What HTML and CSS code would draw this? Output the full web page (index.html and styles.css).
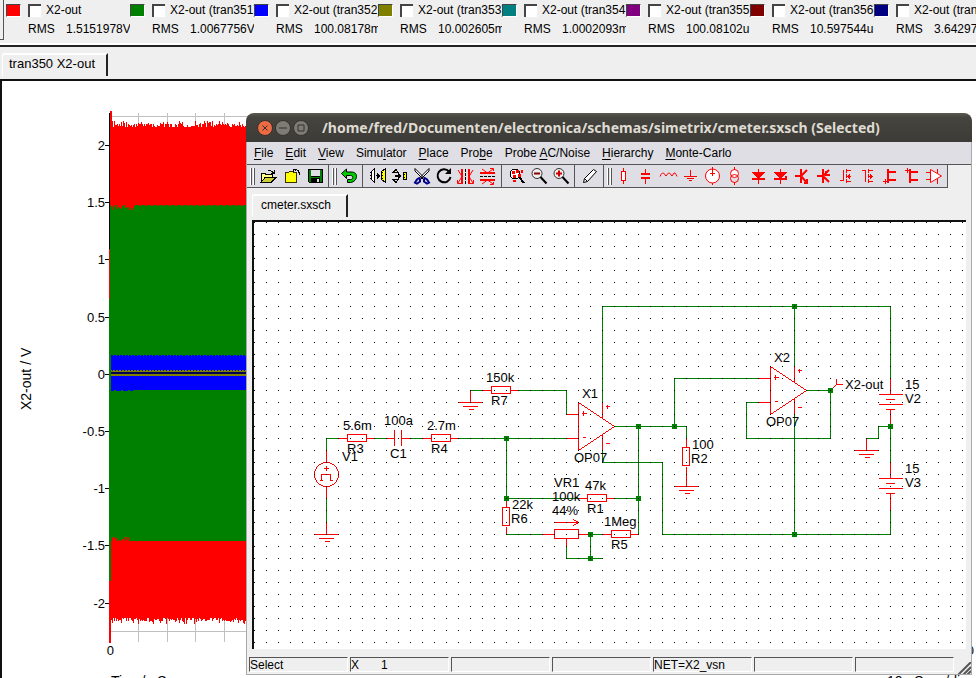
FILE: index.html
```html
<!DOCTYPE html>
<html lang="en">
<head>
  <meta charset="UTF-8">
  <title>SIMetrix</title>
  <link rel="stylesheet" href="styles.css">
</head>
<body>

  <!-- Graph viewer -->
  <div class="legend">
    <div class="legend-grip"></div>
    <div class="curve">
      <span class="swatch red"></span><input type="checkbox" id="c1"><label for="c1">X2-out</label>
      <span class="rms">RMS</span><span class="value">1.5151978V</span>
    </div>
    <div class="curve">
      <span class="swatch green"></span><input type="checkbox" id="c2"><label for="c2">X2-out (tran351)</label>
      <span class="rms">RMS</span><span class="value">1.0067756V</span>
    </div>
    <div class="curve">
      <span class="swatch blue"></span><input type="checkbox" id="c3"><label for="c3">X2-out (tran352)</label>
      <span class="rms">RMS</span><span class="value">100.08178m</span>
    </div>
    <div class="curve">
      <span class="swatch olive"></span><input type="checkbox" id="c4"><label for="c4">X2-out (tran353)</label>
      <span class="rms">RMS</span><span class="value">10.002605m</span>
    </div>
    <div class="curve">
      <span class="swatch teal"></span><input type="checkbox" id="c5"><label for="c5">X2-out (tran354)</label>
      <span class="rms">RMS</span><span class="value">1.0002093m</span>
    </div>
    <div class="curve">
      <span class="swatch purple"></span><input type="checkbox" id="c6"><label for="c6">X2-out (tran355)</label>
      <span class="rms">RMS</span><span class="value">100.08102u</span>
    </div>
    <div class="curve">
      <span class="swatch maroon"></span><input type="checkbox" id="c7"><label for="c7">X2-out (tran356)</label>
      <span class="rms">RMS</span><span class="value">10.597544u</span>
    </div>
    <div class="curve">
      <span class="swatch navy"></span><input type="checkbox" id="c8"><label for="c8">X2-out (tran357)</label>
      <span class="rms">RMS</span><span class="value">3.6429711u</span>
    </div>
  </div>

  <div class="tabs">
    <button type="button" class="tab">tran350 X2-out</button>
  </div>

  <div class="graph">
    <svg width="974" height="597" viewBox="2 81 974 597" shape-rendering="crispEdges">
      <!-- grid -->
      <g fill="#c0c0c0">
        <rect x="110" y="116" width="860" height="1"/>
        <rect x="110" y="631" width="860" height="1"/>
        <rect x="138" y="113" width="1" height="529"/>
        <rect x="167" y="113" width="1" height="529"/>
        <rect x="195" y="113" width="1" height="529"/>
        <rect x="224" y="113" width="1" height="529"/>
      </g>
      <!-- curves -->
      <path id="trace-red" fill="#f00"/>
      <path id="trace-green" fill="#008000"/>
      <rect x="110" y="355" width="860" height="35" fill="#00f"/>
      <path d="M110 355.500H970" stroke="#008000" stroke-dasharray="1 2"/>
      <path d="M109 390.500H133" stroke="#00f" stroke-dasharray="5 2"/>
      <rect x="110" y="371" width="860" height="1" fill="#808000"/>
      <path d="M110 370.500H970" stroke="#808000" stroke-dasharray="2 1"/>
      <rect x="110" y="372" width="860" height="2" fill="#000050"/>
      <rect x="110" y="374" width="860" height="2" fill="#808000"/>
      <!-- y axis -->
      <rect x="109" y="113" width="1" height="136"/>
      <rect x="109" y="249" width="1" height="50" fill="#f00"/>
      <rect x="109" y="299" width="2" height="282" fill="#008000"/>
      <rect x="109" y="581" width="2" height="62" fill="#f00"/>
      <rect x="110" y="111" width="2" height="20" fill="#f00"/>
      <path stroke="#000" d="M105 145.500h4M105 202.500h4M105 259.500h4M105 317.500h4M105 374.500h4M105 431.500h4M105 488.500h4M105 545.500h4M105 603.500h4"/>
      <g class="ticks">
        <text x="105" y="150">2</text>
        <text x="105" y="207">1.5</text>
        <text x="105" y="264">1</text>
        <text x="105" y="322">0.5</text>
        <text x="105" y="379">0</text>
        <text x="105" y="436">-0.5</text>
        <text x="105" y="493">-1</text>
        <text x="105" y="550">-1.5</text>
        <text x="105" y="608">-2</text>
        <text x="114" y="655">0</text>
        <text x="974" y="655">100</text>
      </g>
      <g class="axis-title">
        <text transform="translate(31 410) rotate(-90)">X2-out / V</text>
        <text x="111" y="686">Time/mSecs</text>
        <text x="887" y="686">10mSecs/div</text>
      </g>
    </svg>
  </div>

  <!-- Schematic editor -->
  <div class="window">
    <div class="titlebar">
      <button type="button" class="wm close" aria-label="Close"><svg width="16" height="16"><path d="M5.500 5.500l5 5M10.500 5.500l-5 5"/></svg></button>
      <button type="button" class="wm" aria-label="Minimize"><svg width="16" height="16"><path d="M4 8h8"/></svg></button>
      <button type="button" class="wm" aria-label="Maximize"><svg width="16" height="16"><path d="M5 5h6v6h-6z"/></svg></button>
      <h1>/home/fred/Documenten/electronica/schemas/simetrix/cmeter.sxsch (Selected)</h1>
    </div>

    <div class="window-body">
      <nav class="menubar">
        <button type="button"><u>F</u>ile</button>
        <button type="button"><u>E</u>dit</button>
        <button type="button"><u>V</u>iew</button>
        <button type="button">Simu<u>l</u>ator</button>
        <button type="button"><u>P</u>lace</button>
        <button type="button">Pro<u>b</u>e</button>
        <button type="button">Probe <u>A</u>C/Noise</button>
        <button type="button"><u>H</u>ierarchy</button>
        <button type="button"><u>M</u>onte-Carlo</button>
      </nav>

      <div class="toolbars">
        <div class="toolbar files">
          <span class="grip"></span>
          <button type="button" aria-label="Open">
            <svg viewBox="0 0 22 22"><path fill="#ff8" stroke="#000" d="M4 17.500V8.500h4l1 1h6v3"/><path fill="#cc3" stroke="#000" d="M4 17.500l4-5h11l-5 5z"/><path fill="none" stroke="#000" d="M11 5.500h2l2 1 2 2M17.500 5v4M14 8.500h4"/></svg>
          </button>
          <button type="button" aria-label="Close schematic">
            <svg viewBox="0 0 22 22"><path fill="#ff0" stroke="#330" d="M4.500 17.500v-10h3l1-1h3l1 1h3v10z"/><path fill="none" stroke="#000" d="M12 4.500h3l2 1 1 2v2M12.500 4v3M14 4v2"/></svg>
          </button>
          <button type="button" aria-label="Save">
            <svg viewBox="0 0 22 22"><path d="M3 4h15v14H4l-1-1z"/><path fill="#008000" d="M4 5h2v7h9V5h2v12H4z"/><path fill="#dedee4" d="M6 5h9v6H6z"/><path d="M6 13h9v4H6z"/><path fill="#dedee4" d="M12 14h2v3h-2z"/></svg>
          </button>
        </div>

        <div class="toolbar">
          <span class="grip"></span>
          <button type="button" aria-label="Undo">
            <svg viewBox="0 0 22 22" class="smooth"><path fill="#0c0" stroke="#000" d="M3.500 8.500l5-4.500v3h4.500c4 0 5.500 2 5.500 4.500s-2 5.500-6 6h-3v-3h3c3 0 3-4 0-4h-4v3z"/></svg>
          </button>
          <span class="sep"></span>
          <button type="button" aria-label="Duplicate">
            <svg viewBox="0 0 22 22"><path fill="#fff" stroke="#000" d="M7.500 3.500v14l-3-3v-8zM3 7.500h2M3 10.500h2M3 13.500h2"/><path fill="#ff0" stroke="#000" d="M18.500 3.500v14l-4-3v-8zM14 7.500h2M14 10.500h2M14 13.500h2"/><path d="M9 10h1v1H9zM10 8h1l2 3-2 3h-1z"/></svg>
          </button>
          <button type="button" aria-label="Mirror component">
            <svg viewBox="0 0 22 22"><path fill="none" stroke="#000" d="M4 7.500h5l-2-3zM4 14.500h5l-2 3z"/><path d="M6 10h3V8l3 3-3 3v-2H6z"/><path fill="#ff0" stroke="#000" d="M14.500 7.500h3v7h-3zM14 9.500h2M14 12.500h2"/></svg>
          </button>
          <button type="button" aria-label="Cut">
            <svg viewBox="0 0 22 22" class="smooth"><path fill="#fff" stroke="#000" d="M4 3.500l10 10-1.500 1L4 6zM18 3.500l-10 10 1.500 1L18 6z"/><path fill="none" stroke="#008" stroke-width="2" d="M9 12.500l-3 2-2 3 2 1 3-2v-3M13 12.500l3 2 2 3-2 1-3-2v-3"/></svg>
          </button>
          <button type="button" aria-label="Rotate">
            <svg viewBox="0 0 22 22" class="smooth"><path fill="none" stroke="#000" stroke-width="2" d="M16 6.500A6.500 6.500 0 1 0 17.500 12"/><path d="M18 3v6h-6z"/></svg>
          </button>
          <button type="button" aria-label="Flip horizontally">
            <svg viewBox="0 0 22 22" class="smooth"><path stroke="#000" stroke-dasharray="3 1" d="M10.500 4v15"/><path fill="none" stroke="#f00" stroke-width="2" d="M7 4v15M14 4v15"/><path fill="none" stroke="#f00" d="M3 5l4 6.500-4 6.500M18 5l-4 6.500 4 6.500M2.500 15v3.500H6M18.500 15v3.500H15"/></svg>
          </button>
          <button type="button" aria-label="Flip vertically">
            <svg viewBox="0 0 22 22" class="smooth"><path stroke="#000" stroke-dasharray="3 1" d="M3 11.500h15"/><path fill="none" stroke="#f00" stroke-width="2" d="M3 8h15M3 15h15"/><path fill="none" stroke="#f00" d="M5 4l5.500 4L16 4M5 19l5.500-4 5.500 4M13 3.500h3.500V6M13 19.500h3.500V17"/></svg>
          </button>
          <span class="sep"></span>
          <button type="button" aria-label="Zoom to fit">
            <svg viewBox="0 0 22 22"><circle cx="9" cy="9" r="5" fill="#fff" stroke="#000"/><path fill="#f00" d="M6 6h3v3H6zM10 5h3v3h-3zM7 10h3v3H7zM12 9h3v3h-3zM15 5h2v3h-2zM7 15h3v2H7z"/><path stroke="#000" stroke-width="2" d="M13 12l5 6"/></svg>
          </button>
          <button type="button" aria-label="Zoom out">
            <svg viewBox="0 0 22 22" class="smooth"><circle cx="9" cy="8.500" r="5" fill="#eee" stroke="#333"/><path stroke="#800" stroke-width="2" d="M6 8.500h6"/><path stroke="#000" stroke-width="2" d="M12.500 12l6 6.500"/></svg>
          </button>
          <button type="button" aria-label="Zoom in">
            <svg viewBox="0 0 22 22" class="smooth"><circle cx="9" cy="8.500" r="5" fill="#eee" stroke="#333"/><path stroke="#c00" stroke-width="2" d="M6 8.500h6M9 5.500v6"/><path stroke="#000" stroke-width="2" d="M12.500 12l6 6.500"/></svg>
          </button>
          <span class="sep"></span>
          <button type="button" aria-label="Draw wire">
            <svg viewBox="0 0 22 22" class="smooth"><path fill="#fff" stroke="#000" d="M4.500 17.500l1-4 9-9 3 2-9 10zM5.500 13.500l3 3"/></svg>
          </button>
        </div>

        <div class="toolbar symbols">
          <span class="grip"></span>
          <button type="button" aria-label="Resistor">
            <svg viewBox="0 0 22 22"><path fill="#fff" d="M8.500 6.500h4v9h-4zM10.500 3v3.500M10.500 15.500V19"/></svg>
          </button>
          <button type="button" aria-label="Capacitor">
            <svg viewBox="0 0 22 22"><path d="M10.500 4v5M10.500 13v6"/><path stroke-width="2" d="M6 9h9M6 13h9"/></svg>
          </button>
          <button type="button" aria-label="Inductor">
            <svg viewBox="0 0 22 22" class="smooth"><path d="M3 11.500l1-2 1.500-1.500h1l2.500 3 2.500-3h1l2.500 3 2-3h1l1 1.500 1 2"/></svg>
          </button>
          <button type="button" aria-label="Ground">
            <svg viewBox="0 0 22 22"><path d="M11.500 5v6M5 11.500h13M8 13.500h7M10 15.500h3"/></svg>
          </button>
          <button type="button" aria-label="Voltage source">
            <svg viewBox="0 0 22 22" class="smooth"><circle cx="11.500" cy="11" r="7" fill="#fff"/><path d="M11.500 2v9M9 8.500h5M11.500 18v2"/></svg>
          </button>
          <button type="button" aria-label="Current source">
            <svg viewBox="0 0 22 22" class="smooth"><circle cx="11.500" cy="8.500" r="4" fill="#fff"/><circle cx="11.500" cy="13.500" r="4" fill="none"/><path d="M11.500 2v3M11.500 17v3"/></svg>
          </button>
          <button type="button" aria-label="Diode">
            <svg viewBox="0 0 22 22"><path d="M13.500 4v15M7 7.500h13"/><path fill="#f00" d="M8 8h11l-5.500 5z"/><path stroke-width="2" d="M7 14h13"/></svg>
          </button>
          <button type="button" aria-label="Zener diode">
            <svg viewBox="0 0 22 22"><path d="M13.500 4v15M7 7.500h13"/><path fill="#f00" d="M8 8h11l-5.500 5z"/><path stroke-width="2" d="M7 14h12v-3"/></svg>
          </button>
          <button type="button" aria-label="NPN transistor">
            <svg viewBox="0 0 22 22" class="smooth"><path stroke-width="2" d="M6 11h6M12 4v14M12 11l6-6M12 11l6 7M18 14v4h-3"/></svg>
          </button>
          <button type="button" aria-label="PNP transistor">
            <svg viewBox="0 0 22 22" class="smooth"><path stroke-width="2" d="M6 11h6M12 4v14M12 11l6-6M12 11l6 6M15 6v4h4"/></svg>
          </button>
          <button type="button" aria-label="N-channel MOSFET">
            <svg viewBox="0 0 22 22"><path d="M10.500 5v11M7 15.500h4M13.500 4v4M13.500 9v4M13.500 14v4M14 5.500h4M14 16.500h4M14 11.500h4"/><path fill="#f00" stroke="none" d="M14 11.500l3-3v6z"/></svg>
          </button>
          <button type="button" aria-label="P-channel MOSFET">
            <svg viewBox="0 0 22 22"><path d="M7 5.500h4M10.500 5v12M13.500 4v4M13.500 9v4M13.500 14v4M14 5.500h4M14 16.500h4M14 11.500h4"/><path fill="#f00" stroke="none" d="M18 11.500l-3-3v6z"/></svg>
          </button>
          <button type="button" aria-label="N-channel JFET">
            <svg viewBox="0 0 22 22"><path stroke-width="2" d="M11 4v14M11 7h8M11 15h8"/><path d="M6 16.500h5M8.500 14v5"/></svg>
          </button>
          <button type="button" aria-label="P-channel JFET">
            <svg viewBox="0 0 22 22"><path stroke-width="2" d="M11 4v14M11 7h8M11 15h8"/><path d="M6 5.500h5M8.500 3v5"/></svg>
          </button>
          <button type="button" aria-label="Op-amp">
            <svg viewBox="0 0 22 22" class="smooth"><path fill="#fff" d="M9.500 4.500l11 6.500-11 6.500z"/><path d="M5 7.500h4M5 14.500h4M16.500 4v4M16.500 14v5"/></svg>
          </button>
        </div>
      </div>

      <div class="tabs">
        <button type="button" class="tab">cmeter.sxsch</button>
      </div>

      <div class="sheet">
        <svg width="714" height="427" viewBox="254 222 714 427" shape-rendering="crispEdges">
          <defs>
            <pattern id="grid" x="254" y="222" width="12" height="12" patternUnits="userSpaceOnUse">
              <rect width="1" height="1"/>
            </pattern>
            <g id="gnd"><path d="M-12 0H12M-8 4H7M-2 7H3"/></g>
            <g id="res"><path d="M-12 0H-3M16 0H24"/><path d="M-3 -4H16V3H-3z"/></g>
            <g id="resv"><path d="M0 -12V-3M0 16V24"/><path d="M-4 -3H3V15H-4z"/></g>
            <g id="opamp"><path d="M0 0L36 24L0 48zM-12 12H0M-12 36H0M24 0V15M24 32V48M27 4h4M29 2v4M27 41h4M3 11h5M5 8v5M4 35h3"/></g>
            <g id="cell"><path d="M0 -16V0M-12 0H12M-5 5H4M-12 10H12M-5 15H4M0 15V32"/></g>
          </defs>

          <!-- wires -->
          <g class="wire" transform="translate(0.500 0.500)">
            <path d="M326 450V438H338M374 438H386M410 438H422M458 438H566M326 498V522"/>
            <path d="M470 390H482M518 390H566V414"/>
            <path d="M602 402V306H890V378M602 450V462H662V534H890V510"/>
            <path d="M614 426H686V438M674 426V378H758M638 426V534"/>
            <path d="M506 438V498H578M614 498H638M506 534H542M566 546V558H602M590 534V558M590 534H602"/>
            <path d="M794 306V366M794 414V534M806 390H830V438H746V402H758"/>
            <path d="M890 426V462M890 426H878V438H866"/>
          </g>

          <!-- symbols -->
          <g class="symbol" transform="translate(0.500 0.500)">
            <use href="#res" x="350" y="438"/>
            <use href="#res" x="434" y="438"/>
            <use href="#res" x="494" y="390"/>
            <use href="#res" x="590" y="498"/>
            <use href="#res" x="614" y="534"/>
            <use href="#resv" x="506" y="510"/>
            <use href="#resv" x="686" y="450"/>
            <path d="M686 474V486M386 438H394M394 429V445M401 429V445M401 438H410"/>
            <circle cx="326" cy="474" r="12"/>
            <path d="M326 450V462M326 486V498M326 522V534M323 468H328M326 465V470M321 480V474H330V480M319 480H322M330 480H332"/>
            <path d="M470 390V402M866 438V450"/>
            <use href="#gnd" x="326" y="534"/>
            <use href="#gnd" x="470" y="402"/>
            <use href="#gnd" x="686" y="486"/>
            <use href="#gnd" x="866" y="450"/>
            <use href="#opamp" x="578" y="402"/>
            <use href="#opamp" x="770" y="366"/>
            <path d="M542 534H554M554 529H578V538H554zM578 534H590M566 538V546M554 522H578M573 519L578 522L573 525"/>
            <use href="#cell" x="890" y="394"/>
            <use href="#cell" x="890" y="478"/>
            <path d="M830 390L836 384V378M836 384H842"/>
          </g>

          <!-- junctions -->
          <g class="node">
            <rect x="504" y="436" width="5" height="5"/>
            <rect x="504" y="496" width="5" height="5"/>
            <rect x="636" y="424" width="5" height="5"/>
            <rect x="636" y="496" width="5" height="5"/>
            <rect x="672" y="424" width="5" height="5"/>
            <rect x="588" y="532" width="5" height="5"/>
            <rect x="588" y="556" width="5" height="5"/>
            <rect x="792" y="304" width="5" height="5"/>
            <rect x="792" y="532" width="5" height="5"/>
            <rect x="828" y="388" width="5" height="5"/>
            <rect x="888" y="424" width="5" height="5"/>
          </g>

          <rect x="254" y="222" width="714" height="427" fill="url(#grid)"/>

          <g class="part">
            <text x="486" y="382">150k</text><text x="491" y="405">R7</text>
            <text x="343" y="430">5.6m</text><text x="347" y="453">R3</text>
            <text x="342" y="461">V1</text>
            <text x="384" y="425">100a</text><text x="390" y="458">C1</text>
            <text x="427" y="430">2.7m</text><text x="431" y="453">R4</text>
            <text x="582" y="398">X1</text><text x="574" y="462">OP07</text>
            <text x="554" y="487">VR1</text><text x="552" y="501">100k</text><text x="552" y="515">44%</text>
            <text x="585" y="490">47k</text><text x="587" y="513">R1</text>
            <text x="512" y="509">22k</text><text x="511" y="523">R6</text>
            <text x="604" y="526">1Meg</text><text x="611" y="549">R5</text>
            <text x="692" y="449">100</text><text x="691" y="463">R2</text>
            <text x="774" y="362">X2</text><text x="766" y="426">OP07</text>
            <text x="845" y="389">X2-out</text>
            <text x="905" y="389">15</text><text x="905" y="403">V2</text>
            <text x="905" y="473">15</text><text x="905" y="487">V3</text>
          </g>
        </svg>
      </div>

      <div class="statusbar">
        <div class="cell">Select</div>
        <div class="cell"><span>X</span><span class="count">1</span></div>
        <div class="cell"></div>
        <div class="cell"></div>
        <div class="cell">NET=X2_vsn</div>
        <div class="cell"></div>
        <div class="cell"></div>
        <svg class="resize" width="14" height="12"><path stroke="#555" stroke-width="2" d="M1 13L14 0M6 13l8-8M10 13l4-4"/></svg>
      </div>
    </div>
  </div>

  <script src="script.js"></script>
</body>
</html>
```
FILE: styles.css
```css
* {
  box-sizing: border-box;
}

body {
  margin: 0;
  height: 100vh;
  display: flex;
  flex-direction: column;
  overflow: hidden;
  background: #efefef;
  color: #000;
  font-family: "Liberation Sans", Arial, sans-serif;
  font-size: 13px;
}

button {
  margin: 0;
  padding: 0;
  border: 0;
  background: none;
  color: inherit;
  font: inherit;
}

/* legend */
.legend {
  display: flex;
  height: 47px;
  overflow: hidden;
  font-size: 12px;
  border-bottom: 2px solid #222;
  box-shadow: inset 0 -2px #fff;
}

.legend-grip {
  flex: none;
  width: 4px;
  height: 40px;
  margin-right: 2px;
  border-right: 1px solid #555;
  border-bottom: 1px solid #555;
}

.curve {
  flex: none;
  width: 124px;
  display: grid;
  grid-template-columns: 15px 25px 1fr;
  grid-template-rows: 20px 18px;
  align-items: center;
  align-content: start;
  overflow: hidden;
  white-space: nowrap;
}

.curve input {
  appearance: none;
  width: 13px;
  height: 13px;
  margin: 0 0 0 7px;
  background: #fff;
  border: solid #444;
  border-width: 2px 0 0 2px;
}

.curve .rms {
  grid-column: 1 / 3;
  padding-left: 22px;
}

.curve .value {
  padding-left: 20px;
}

.swatch {
  width: 15px;
  height: 13px;
  border: 1px solid #444;
  border-right-color: #fff;
  border-bottom-color: #fff;
}

.red { background: #f00; }
.green { background: #008000; }
.blue { background: #00f; }
.olive { background: #808000; }
.teal { background: #008080; }
.purple { background: #800080; }
.maroon { background: #800000; }
.navy { background: #000080; }

/* tabs */
.tabs {
  display: flex;
  height: 32px;
  padding: 6px 2px 3px;
}

.tab {
  padding: 0 11px 4px 6px;
  border: solid #fff;
  border-width: 2px 2px 0 1px;
  border-right-color: #222;
  border-radius: 2px 0 0 0;
}

/* graph */
.graph {
  flex: 1;
  overflow: hidden;
  background: #fff;
  border: solid #111;
  border-width: 2px 0 0 2px;
}

.ticks {
  text-anchor: end;
}

.axis-title {
  font-size: 14px;
}

/* schematic window */
.window {
  position: absolute;
  top: 113px;
  right: 4px;
  bottom: 3px;
  left: 246px;
  display: flex;
  flex-direction: column;
  font-size: 12px;
}

.titlebar {
  display: flex;
  align-items: center;
  gap: 2px;
  height: 29px;
  padding-left: 11px;
  border-radius: 8px 8px 0 0;
  background: linear-gradient(#5a594f, #45443e 15%, #3c3b37);
}

.titlebar h1 {
  margin: 0 0 0 11px;
  overflow: hidden;
  white-space: nowrap;
  color: #dfdbd2;
  font: bold 14px "Noto Sans", "Open Sans", sans-serif;
}

.wm {
  width: 16px;
  height: 16px;
  border-radius: 50%;
  border: 1px solid #33322e;
  background: #7d7b73;
}

.wm svg {
  display: block;
  margin: -1px;
  fill: none;
  stroke: #33322e;
}

.wm.close {
  background: #ee6a42;
}

.window-body {
  flex: 1;
  min-height: 0;
  display: flex;
  flex-direction: column;
  background: #efefef;
  border: solid #aaa;
  border-width: 0 1px 1px;
}

.menubar {
  display: flex;
  gap: 12px;
  height: 23px;
  padding-left: 7px;
  background: #dedee4;
  border-bottom: 1px solid #555;
}

.menubar u {
  text-underline-offset: 2px;
}

.toolbars {
  display: flex;
  height: 23px;
}

.toolbar {
  display: flex;
  align-items: center;
  padding: 0 2px 0 3px;
  background: #dedee4;
  border: solid #555;
  border-width: 0 1px 1px 0;
}

.toolbar button {
  width: 22px;
  height: 22px;
}

.toolbar svg {
  display: block;
  width: 22px;
  height: 22px;
  shape-rendering: crispEdges;
}

.toolbar .smooth {
  shape-rendering: auto;
}

.files {
  padding-right: 0;
}

.files button {
  width: 24px;
}

.files svg {
  margin: 0 1px;
}

.symbols {
  padding-right: 4px;
}

.symbols svg {
  fill: none;
  stroke: #f00;
}

.grip {
  width: 6px;
  height: 17px;
  background: linear-gradient(90deg, #fff 1px, #555 1px 2px, #dedee4 2px 3px, #fff 3px 4px, #555 4px 5px, #dedee4 5px);
}

.sep {
  align-self: stretch;
  width: 1px;
  margin: 0 4px 0 2px;
  background: #555;
}

.window .tabs {
  padding: 6px 5px 3px;
}

.window .tab {
  padding: 0 15px 4px 8px;
}

.sheet {
  flex: 1;
  min-height: 0;
  margin: 0 5px;
  overflow: hidden;
  background: #fff;
  border: solid #111;
  border-width: 2px 0 0 2px;
}

.sheet svg,
.graph svg {
  display: block;
}

.wire {
  fill: none;
  stroke: #008000;
}

.symbol {
  fill: none;
  stroke: #f00;
}

.node {
  fill: #008000;
}

.part {
  font-size: 13px;
}

.statusbar {
  display: flex;
  gap: 2px;
  padding: 8px 0 2px 2px;
}

.cell {
  flex: 0 1 99px;
  display: flex;
  height: 15px;
  line-height: 14px;
  border: 1px solid #555;
  border-right-color: #fff;
  border-bottom-color: #fff;
}

.count {
  margin-left: 22px;
}

.resize {
  align-self: flex-end;
  margin: 0 0 -2px auto;
}
```
FILE: script.js
```js
// outline of a noisy band, one step for each pixel column
let seed = 7;

function noise(range) {
  seed = (seed * 1664525 + 1013904223) % 4294967296;
  return Math.floor(seed / 4294967296 * range);
}

function band(left, right, topAt, bottomAt) {
  let d = "M" + left + " 374";
  for (let x = left; x < right; x++) {
    d += "V" + topAt(x) + "h1";
  }
  for (let x = right; x > left; x--) {
    d += "V" + bottomAt(x) + "h-1";
  }
  return d + "z";
}

// a few pixels up and down, with a peak every few columns
function ripple() {
  return noise(4) === 0 ? 3 + noise(4) : noise(4);
}

document.getElementById("trace-red").setAttribute("d",
  band(110, 970, () => 127 - ripple(), () => 618 + ripple()));

document.getElementById("trace-green").setAttribute("d",
  band(110, 970,
    x => x < 134 ? 205 + noise(6) : 205 + (x % 3 === 0 ? 1 : 0),
    x => x < 132 && x > 112 ? 541 - noise(5) : 541));
```
